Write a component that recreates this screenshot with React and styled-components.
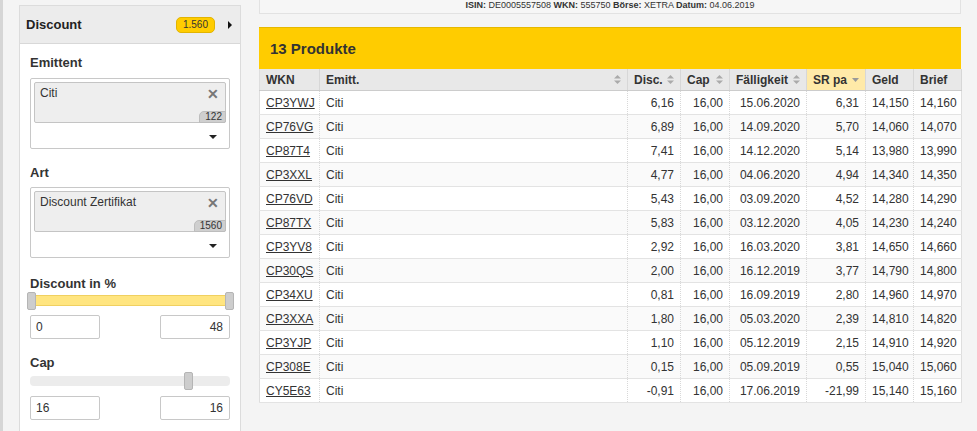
import React from 'react';
import styled, { createGlobalStyle } from 'styled-components';

const GlobalStyle = createGlobalStyle`
  html, body {
    margin: 0;
    padding: 0;
    background: #f4f4f4;
    font-family: "Liberation Sans", Arial, sans-serif;
    color: #333;
  }
  body {
    border-left: 3px solid #d6d6d6;
    height: 431px;
    overflow: hidden;
  }
`;

const Page = styled.div`
  display: flex;
  align-items: flex-start;
  gap: 18px;
  padding-left: 16px;
`;

const Sidebar = styled.div`
  width: 220px;
  margin-top: 5px;
  background: #fff;
  border: 1px solid #dcdcdc;
  border-bottom: none;
  height: 440px;
`;

const SideHeader = styled.div`
  display: flex;
  align-items: center;
  height: 37px;
  padding: 0 6px 0 6px;
  background: #ececec;
  border-bottom: 1px solid #d8d8d8;
  font-size: 13px;
  font-weight: bold;
  color: #222;
`;

const HeaderTitle = styled.span`
  flex: 1;
`;

const CountBadge = styled.span`
  background: #ffcc00;
  border: 1px solid #e2b400;
  border-radius: 5px;
  font-size: 10px;
  font-weight: normal;
  color: #333;
  padding: 1px 6px;
  line-height: 12px;
  margin-right: 13px;
`;

const SideArrow = styled.span`
  width: 0;
  height: 0;
  border-top: 4px solid transparent;
  border-bottom: 4px solid transparent;
  border-left: 4px solid #111;
  margin-right: 2px;
`;

const SideBody = styled.div`
  padding: 11px 10px 0 10px;
`;

const Label = styled.div`
  font-size: 13px;
  font-weight: bold;
  line-height: 15px;
  color: #333;
  margin-top: ${p => p.$top || 0}px;
  margin-bottom: ${p => p.$bottom || 0}px;
`;

const SelectBox = styled.div`
  border: 1px solid #c8c8c8;
  border-radius: 2px;
  padding: 3px 3px 0 3px;
  height: 66px;
`;

const Tag = styled.div`
  position: relative;
  height: 36px;
  background: #eeeeee;
  border: 1px solid #c4c4c4;
  border-radius: 2px;
  display: flex;
  justify-content: space-between;
  padding: 3px 6px 0 5px;
  font-size: 12px;
  color: #333;
`;

const TagClose = styled.span`
  font-size: 14px;
  font-weight: bold;
  color: #777;
  line-height: 12px;
  margin-top: 2px;
`;

const TagCount = styled.span`
  position: absolute;
  right: -1px;
  bottom: -1px;
  background: #cfcfcf;
  border: 1px solid #bdbdbd;
  border-radius: 5px 0 2px 0;
  font-size: 10px;
  line-height: 10px;
  padding: 0 3px 0 5px;
  color: #333;
`;

const DropRow = styled.div`
  height: 28px;
  display: flex;
  align-items: center;
  justify-content: flex-end;
  padding-right: 9px;
`;

const DropArrow = styled.span`
  width: 0;
  height: 0;
  border-left: 4px solid transparent;
  border-right: 4px solid transparent;
  border-top: 4px solid #222;
`;

const Track = styled.div`
  position: relative;
  height: ${p => (p.$filled ? 9 : 10)}px;
  margin: ${p => (p.$filled ? '4px -3px 0 -3px' : '6px 0 0 0')};
  background: ${p => (p.$filled ? '#ffe580' : '#ececec')};
  border: ${p => (p.$filled ? '1px solid #f0d060' : 'none')};
  border-radius: ${p => (p.$filled ? 0 : 4)}px;
`;

const Handle = styled.span`
  position: absolute;
  top: ${p => (p.$tall ? -4 : -3)}px;
  width: 7px;
  height: ${p => (p.$tall ? 16 : 14)}px;
  background: #cdcdcd;
  border: 1px solid #b5b5b5;
  border-radius: 2px;
  margin-left: -4px;
`;

const InputRow = styled.div`
  display: flex;
  justify-content: space-between;
  margin-top: ${p => p.$top}px;
`;

const NumInput = styled.div`
  box-sizing: border-box;
  width: 70px;
  height: 24px;
  border: 1px solid #c8c8c8;
  border-radius: 2px;
  font-size: 12px;
  line-height: 22px;
  padding: 0 ${p => (p.$right ? 6 : 5)}px;
  text-align: ${p => (p.$right ? 'right' : 'left')};
  color: #333;
  background: #fff;
`;

const Main = styled.div`
  width: 702px;
`;

const InfoBar = styled.div`
  height: 13px;
  background: #f6f6f6;
  border: 1px solid #e2e2e2;
  border-top: none;
  font-size: 9px;
  line-height: 10px;
  text-align: center;
  color: #333;
`;

const InfoKey = styled.b`
  font-weight: bold;
`;

const Panel = styled.div`
  margin-top: 13px;
`;

const PanelHead = styled.div`
  height: 41px;
  background: #ffcc00;
  border-top: 1px solid #e5b800;
  display: flex;
  align-items: center;
  padding-left: 11px;
  font-size: 15px;
  font-weight: bold;
  color: #333;
`;

const Table = styled.table`
  width: 702px;
  border-collapse: collapse;
  table-layout: fixed;
  font-size: 12px;
  background: #fff;
  border: 1px solid #dedede;
  border-top: none;
`;

const Th = styled.th`
  height: 21px;
  padding: 0 6px;
  text-align: left;
  font-weight: bold;
  color: #333;
  background: ${p => (p.$active ? '#ffeaa8' : '#e8e8e8')};
  border-right: 1px solid #d7d7d7;
  border-bottom: 1px solid #cccccc;
  white-space: nowrap;
`;

const ThInner = styled.div`
  display: flex;
  align-items: center;
  justify-content: space-between;
`;

const Tr = styled.tr`
  background: ${p => (p.$odd ? '#fafafa' : '#fff')};
`;

const Td = styled.td`
  height: 23px;
  padding: 0 6px;
  text-align: ${p => (p.$num ? 'right' : 'left')};
  border-bottom: 1px solid #e3e3e3;
  border-left: 1px dotted #d8d8d8;
  white-space: nowrap;
  color: #333;
`;

const Wkn = styled.a`
  color: #333;
  text-decoration: underline;
`;

const SortIcon = ({ down }) => (
  <svg width="7" height="9" viewBox="0 0 7 9">
    {down ? (
      <path d="M0 3h7L3.5 7z" fill="#999" />
    ) : (
      <>
        <path d="M0 3.5h7L3.5 0z" fill="#aaa" />
        <path d="M0 5.5h7L3.5 9z" fill="#aaa" />
      </>
    )}
  </svg>
);

const columns = [
  { label: 'WKN', width: 60 },
  { label: 'Emitt.', width: 308, sort: true },
  { label: 'Disc.', width: 53, sort: true },
  { label: 'Cap', width: 49, sort: true },
  { label: 'Fälligkeit', width: 77, sort: true },
  { label: 'SR pa', width: 59, down: true, active: true },
  { label: 'Geld', width: 48 },
  { label: 'Brief', width: 48 },
];

const rows = [
  ['CP3YWJ', '6,16', '15.06.2020', '6,31', '14,150', '14,160'],
  ['CP76VG', '6,89', '14.09.2020', '5,70', '14,060', '14,070'],
  ['CP87T4', '7,41', '14.12.2020', '5,14', '13,980', '13,990'],
  ['CP3XXL', '4,77', '04.06.2020', '4,94', '14,340', '14,350'],
  ['CP76VD', '5,43', '03.09.2020', '4,52', '14,280', '14,290'],
  ['CP87TX', '5,83', '03.12.2020', '4,05', '14,230', '14,240'],
  ['CP3YV8', '2,92', '16.03.2020', '3,81', '14,650', '14,660'],
  ['CP30QS', '2,00', '16.12.2019', '3,77', '14,790', '14,800'],
  ['CP34XU', '0,81', '16.09.2019', '2,80', '14,960', '14,970'],
  ['CP3XXA', '1,80', '05.03.2020', '2,39', '14,810', '14,820'],
  ['CP3YJP', '1,10', '05.12.2019', '2,15', '14,910', '14,920'],
  ['CP308E', '0,15', '05.09.2019', '0,55', '15,040', '15,060'],
  ['CY5E63', '-0,91', '17.06.2019', '-21,99', '15,140', '15,160'],
];

const MultiSelect = ({ value, count }) => (
  <SelectBox>
    <Tag>
      <span>{value}</span>
      <TagClose>✕</TagClose>
      <TagCount>{count}</TagCount>
    </Tag>
    <DropRow>
      <DropArrow />
    </DropRow>
  </SelectBox>
);

const App = () => (
  <>
    <GlobalStyle />
    <Page>
      <Sidebar>
        <SideHeader>
          <HeaderTitle>Discount</HeaderTitle>
          <CountBadge>1.560</CountBadge>
          <SideArrow />
        </SideHeader>
        <SideBody>
          <Label $bottom={8}>Emittent</Label>
          <MultiSelect value="Citi" count="122" />
          <Label $top={16} $bottom={7}>Art</Label>
          <MultiSelect value="Discount Zertifikat" count="1560" />
          <Label $top={18}>Discount in %</Label>
          <Track $filled>
            <Handle style={{ left: '3px' }} $tall />
            <Handle style={{ left: 'calc(100% - 3px)' }} $tall />
          </Track>
          <InputRow $top={9}>
            <NumInput>0</NumInput>
            <NumInput $right>48</NumInput>
          </InputRow>
          <Label $top={16}>Cap</Label>
          <Track>
            <Handle style={{ left: '79%' }} $tall />
          </Track>
          <InputRow $top={10}>
            <NumInput>16</NumInput>
            <NumInput $right>16</NumInput>
          </InputRow>
        </SideBody>
      </Sidebar>
      <Main>
        <InfoBar>
          <InfoKey>ISIN:</InfoKey> DE0005557508 <InfoKey>WKN:</InfoKey> 555750{' '}
          <InfoKey>Börse:</InfoKey> XETRA <InfoKey>Datum:</InfoKey> 04.06.2019
        </InfoBar>
        <Panel>
          <PanelHead>13 Produkte</PanelHead>
          <Table>
            <colgroup>
              {columns.map(c => (
                <col key={c.label} style={{ width: c.width }} />
              ))}
            </colgroup>
            <thead>
              <tr>
                {columns.map(c => (
                  <Th key={c.label} $active={c.active}>
                    <ThInner>
                      <span>{c.label}</span>
                      {(c.sort || c.down) && <SortIcon down={c.down} />}
                    </ThInner>
                  </Th>
                ))}
              </tr>
            </thead>
            <tbody>
              {rows.map((r, i) => (
                <Tr key={r[0]} $odd={i % 2 === 1}>
                  <Td><Wkn href="#">{r[0]}</Wkn></Td>
                  <Td>Citi</Td>
                  <Td $num>{r[1]}</Td>
                  <Td $num>16,00</Td>
                  <Td $num>{r[2]}</Td>
                  <Td $num>{r[3]}</Td>
                  <Td $num>{r[4]}</Td>
                  <Td $num>{r[5]}</Td>
                </Tr>
              ))}
            </tbody>
          </Table>
        </Panel>
      </Main>
    </Page>
  </>
);

export default App;
